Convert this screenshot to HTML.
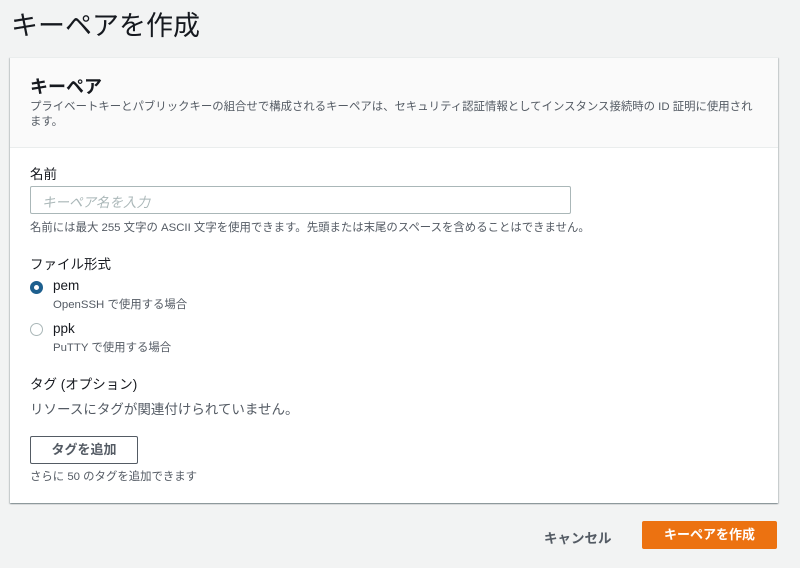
<!DOCTYPE html>
<html><head><meta charset="utf-8"><style>
*{margin:0;padding:0;box-sizing:border-box}
body{width:800px;height:568px;background:#f2f3f3;font-family:"Liberation Sans","Noto Sans CJK JP",sans-serif;color:#16191f;position:relative;overflow:hidden}
.a{position:absolute;white-space:nowrap}
.card{position:absolute;left:10px;top:57px;width:768px;height:446px;background:#fff;box-shadow:0 1px 1px rgba(0,28,36,.3),1px 1px 1px rgba(0,28,36,.15),-1px 1px 1px rgba(0,28,36,.15);border-top:1px solid #eaeded}
.hd{position:absolute;left:0;top:0;width:768px;height:90px;background:#fafafa;border-bottom:1px solid #eaeded}
.s{font-size:11.4px;color:#545b64}
</style></head><body>
<div class="a" style="left:11px;top:4px;font-size:27px;color:#16191f">キーペアを作成</div>
<div class="card"><div class="hd"></div></div>
<div class="a" style="left:30px;top:73px;font-size:18px;font-weight:bold">キーペア</div>
<div class="a s" style="left:30px;top:100px;font-size:11.4px;line-height:15px">プライベートキーとパブリックキーの組合せで構成されるキーペアは、セキュリティ認証情報としてインスタンス接続時の ID 証明に使用され<br>ます。</div>
<div class="a" style="left:30px;top:163px;font-size:13.5px">名前</div>
<div class="a" style="left:30px;top:186px;width:541px;height:28px;border:1px solid #aab7b8;border-radius:2px;background:#fff"></div>
<div class="a" style="left:42px;top:191px;font-size:13.5px;color:#aab7b8;font-style:italic">キーペア名を入力</div>
<div class="a s" style="left:30px;top:219px">名前には最大 255 文字の ASCII 文字を使用できます。先頭または末尾のスペースを含めることはできません。</div>
<div class="a" style="left:30px;top:253px;font-size:13.5px">ファイル形式</div>
<div class="a" style="left:30px;top:281px;width:13px;height:13px;border-radius:50%;border:4px solid #1d5f8e;background:#fff"></div>
<div class="a" style="left:53px;top:278px;font-size:13.5px">pem</div>
<div class="a s" style="left:53px;top:296px">OpenSSH で使用する場合</div>
<div class="a" style="left:30px;top:323px;width:13px;height:13px;border-radius:50%;border:1px solid #aab7b8;background:#fff"></div>
<div class="a" style="left:53px;top:321px;font-size:13.5px">ppk</div>
<div class="a s" style="left:53px;top:339px">PuTTY で使用する場合</div>
<div class="a" style="left:30px;top:373px;font-size:13.5px">タグ (オプション)</div>
<div class="a" style="left:30px;top:398px;font-size:13.5px;color:#545b64">リソースにタグが関連付けられていません。</div>
<div class="a" style="left:30px;top:436px;width:108px;height:28px;border:1px solid #545b64;border-radius:2px;background:#fff;font-size:13px;font-weight:bold;text-align:center;line-height:26px;color:#545b64">タグを追加</div>
<div class="a s" style="left:30px;top:468px">さらに 50 のタグを追加できます</div>
<div class="a" style="left:544px;top:527px;font-size:13.5px;font-weight:bold;color:#545b64">キャンセル</div>
<div class="a" style="left:642px;top:521px;width:135px;height:28px;background:#ec7211;border-radius:2px;color:#fff;font-size:13px;font-weight:bold;text-align:center;line-height:28px">キーペアを作成</div>
</body></html>
